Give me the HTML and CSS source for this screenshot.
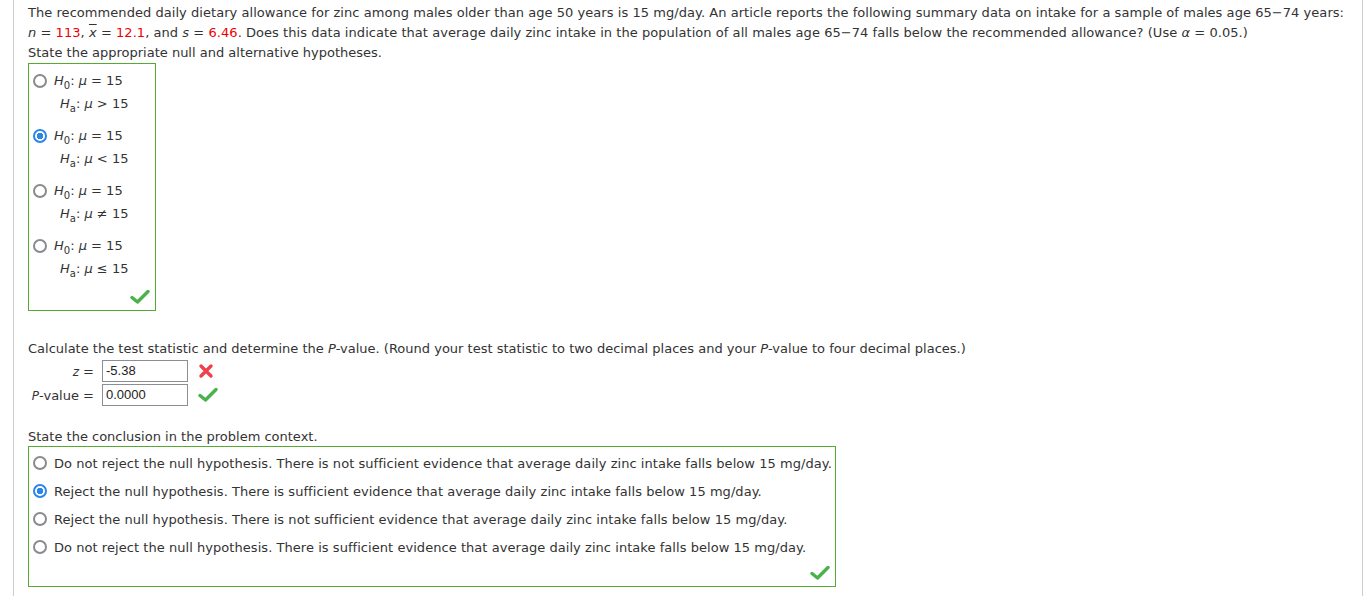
FILE: index.html
```html
<!DOCTYPE html>
<html lang="en">
<head>
    <meta charset="UTF-8">
    <title>Zinc intake hypothesis test</title>
    <link rel="stylesheet" href="styles.css">
</head>
<body>
    <div class="page">
        <p class="question">
            The recommended daily dietary allowance for zinc among males older than age 50 years is 15 mg/day. An article reports the following summary data on intake for a sample of males age 65&minus;74 years:<br>
            <i>n</i> = <span class="val">113</span>, <span class="xbar"><i>x</i></span> = <span class="val">12.1</span>, and <i>s</i> = <span class="val">6.46</span>. Does this data indicate that average daily zinc intake in the population of all males age 65&minus;74 falls below the recommended allowance? (Use <i>&alpha;</i> = 0.05.)
        </p>
        <p class="prompt">State the appropriate null and alternative hypotheses.</p>

        <!-- Hypotheses -->
        <div class="answer-box hyp-box">
            <div class="hyp">
                <div class="hyp-row"><span class="radio"></span><span><i>H</i><sub>0</sub>: <i>&mu;</i> = 15</span></div>
                <div class="hyp-row alt"><span><i>H</i><sub>a</sub>: <i>&mu;</i> &gt; 15</span></div>
            </div>
            <div class="hyp">
                <div class="hyp-row"><span class="radio checked"></span><span><i>H</i><sub>0</sub>: <i>&mu;</i> = 15</span></div>
                <div class="hyp-row alt"><span><i>H</i><sub>a</sub>: <i>&mu;</i> &lt; 15</span></div>
            </div>
            <div class="hyp">
                <div class="hyp-row"><span class="radio"></span><span><i>H</i><sub>0</sub>: <i>&mu;</i> = 15</span></div>
                <div class="hyp-row alt"><span><i>H</i><sub>a</sub>: <i>&mu;</i> &ne; 15</span></div>
            </div>
            <div class="hyp">
                <div class="hyp-row"><span class="radio"></span><span><i>H</i><sub>0</sub>: <i>&mu;</i> = 15</span></div>
                <div class="hyp-row alt"><span><i>H</i><sub>a</sub>: <i>&mu;</i> &le; 15</span></div>
            </div>
            <div class="box-mark">
                <svg class="mark" width="20" height="16" viewBox="0 0 20 16"><path d="M2 8.5 L7.5 13 L18 2.5" fill="none" stroke="#4bb24b" stroke-width="3.4" stroke-linecap="round" stroke-linejoin="round"/></svg>
            </div>
        </div>

        <!-- Test statistic -->
        <p class="prompt calc">Calculate the test statistic and determine the <i>P</i>-value. (Round your test statistic to two decimal places and your <i>P</i>-value to four decimal places.)</p>
        <div class="calc-grid">
            <span class="calc-label"><i>z</i> =</span>
            <span class="calc-field">-5.38</span>
            <svg class="mark" width="16" height="16" viewBox="0 0 16 16"><path d="M3 3 L13 13 M13 3 L3 13" stroke="#f0404a" stroke-width="3.4" stroke-linecap="round"/></svg>

            <span class="calc-label"><i>P</i>-value =</span>
            <span class="calc-field">0.0000</span>
            <svg class="mark" width="20" height="16" viewBox="0 0 20 16"><path d="M2 8.5 L7.5 13 L18 2.5" fill="none" stroke="#4bb24b" stroke-width="3.4" stroke-linecap="round" stroke-linejoin="round"/></svg>
        </div>

        <!-- Conclusion -->
        <p class="prompt concl">State the conclusion in the problem context.</p>
        <div class="answer-box concl-box">
            <div class="choice"><span class="radio"></span>Do not reject the null hypothesis. There is not sufficient evidence that average daily zinc intake falls below 15 mg/day.</div>
            <div class="choice"><span class="radio checked"></span>Reject the null hypothesis. There is sufficient evidence that average daily zinc intake falls below 15 mg/day.</div>
            <div class="choice"><span class="radio"></span>Reject the null hypothesis. There is not sufficient evidence that average daily zinc intake falls below 15 mg/day.</div>
            <div class="choice"><span class="radio"></span>Do not reject the null hypothesis. There is sufficient evidence that average daily zinc intake falls below 15 mg/day.</div>
            <div class="box-mark">
                <svg class="mark" width="20" height="16" viewBox="0 0 20 16"><path d="M2 8.5 L7.5 13 L18 2.5" fill="none" stroke="#4bb24b" stroke-width="3.4" stroke-linecap="round" stroke-linejoin="round"/></svg>
            </div>
        </div>
    </div>
</body>
</html>
```

FILE: styles.css
```css
body {
    margin: 0;
    font-family: "DejaVu Sans", Verdana, sans-serif;
    font-size: 13px;
    color: #333;
    background-color: #fff;
}

.page {
    margin-left: 13px;
    width: 1334px;
    min-height: 100vh;
    padding: 3px 0 0 14px;
    border-left: 1px solid #ccc;
    border-right: 1px solid #ccc;
}

p {
    margin: 0;
    line-height: 20px;
}

.question {
    letter-spacing: 0.05px;
}

.val {
    color: #e00;
}

.xbar {
    text-decoration: overline;
}

sub {
    font-size: 10px;
    vertical-align: -4px;
    line-height: 0;
}

/* Answer boxes */
.answer-box {
    border: 1px solid #55aa33;
}

.hyp-box {
    width: 126px;
    padding-top: 5px;
}

.hyp {
    margin-bottom: 10px;
}

.hyp-row {
    display: flex;
    align-items: center;
    height: 23px;
    padding-left: 4px;
    gap: 7px;
}

.hyp-row.alt {
    height: 22px;
    padding-left: 31px;
}

.box-mark {
    display: flex;
    justify-content: flex-end;
    padding: 0 5px 5px 0;
}

.hyp-box .box-mark {
    margin-top: 7px;
}

/* Radio buttons */
.radio {
    box-sizing: border-box;
    width: 14px;
    height: 14px;
    border: 2px solid #8a8a8f;
    border-radius: 50%;
    flex-shrink: 0;
    display: inline-block;
}

.radio.checked {
    border-color: #2a86e8;
    background: radial-gradient(circle, #2a86e8 0 3px, #fff 3.5px);
}

/* Test statistic */
.calc {
    margin-top: 28px;
}

.calc-grid {
    display: grid;
    grid-template-columns: 66px 86px 30px;
    column-gap: 8px;
    row-gap: 2px;
    align-items: center;
    margin-top: 1px;
}

.calc-label {
    text-align: right;
}

.calc-label i {
    font-size: 12px;
}

.calc-field {
    box-sizing: border-box;
    height: 22px;
    border: 1px solid #8d8d94;
    padding: 2px 3px;
    font-family: "Liberation Sans", Arial, sans-serif;
    font-size: 13px;
    color: #222;
    line-height: 16px;
}

.mark {
    display: block;
    margin-left: 2px;
}

/* Conclusion */
.concl {
    margin-top: 22px;
    line-height: 18px;
}

.concl-box {
    width: 806px;
    padding-top: 2px;
}

.choice {
    display: flex;
    align-items: center;
    gap: 7px;
    height: 28px;
    padding-left: 4px;
    letter-spacing: 0.05px;
}

.concl-box .box-mark {
    margin-top: 4px;
}
```
